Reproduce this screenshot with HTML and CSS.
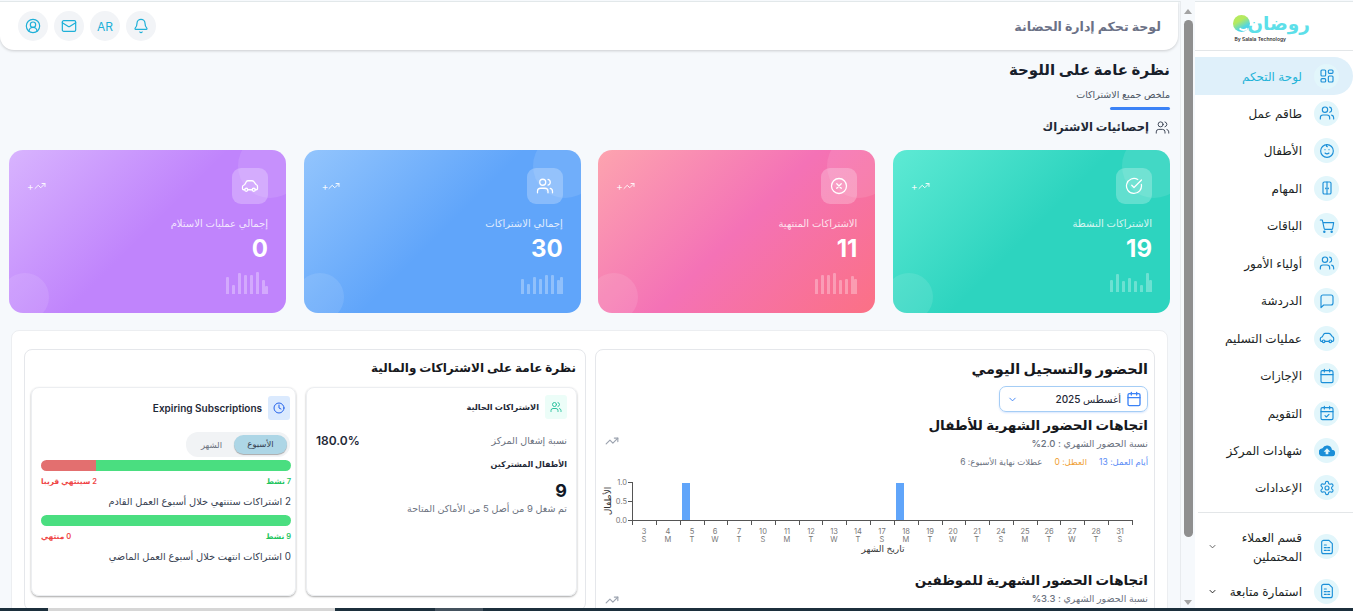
FILE: index.html
```html
<!DOCTYPE html>
<html lang="ar" dir="rtl">
<head>
    <meta charset="UTF-8">
    <title>لوحة تحكم إدارة الحضانة</title>
    <link rel="stylesheet" href="styles.css">
</head>
<body>
    <svg class="sprites" width="0" height="0">
        <symbol id="i-users" viewBox="0 0 24 24"><path d="M16 21v-2a4 4 0 0 0-4-4H6a4 4 0 0 0-4 4v2"/><circle cx="9" cy="7" r="4"/><path d="M22 21v-2a4 4 0 0 0-3-3.87"/><path d="M16 3.13a4 4 0 0 1 0 7.75"/></symbol>
        <symbol id="i-car" viewBox="0 0 24 24"><path d="M5 17H3.5A1.5 1.5 0 0 1 2 15.500V13c0-1 .6-1.700 1.500-2L5 10l2-3.500C7.500 5.600 8.300 5 9.300 5h5.400c1 0 1.800.5 2.400 1.300L20 10l1 .6c.7.4 1 1.100 1 1.900v3a1.500 1.500 0 0 1-1.500 1.500H19"/><circle cx="7" cy="17" r="2"/><circle cx="17" cy="17" r="2"/><path d="M9 17h6"/></symbol>
        <symbol id="i-cal" viewBox="0 0 24 24"><rect x="3" y="4" width="18" height="18" rx="2"/><path d="M16 2v4M8 2v4M3 10h18"/></symbol>
        <symbol id="i-trend" viewBox="0 0 24 24"><path d="M22 7l-8.500 8.500-5-5L2 17"/><path d="M16 7h6v6"/></symbol>
        <symbol id="i-sheet" viewBox="0 0 24 24"><path d="M15 2H7a3 3 0 0 0-3 3v14a3 3 0 0 0 3 3h10a3 3 0 0 0 3-3V7z"/><path d="M8 13h3M13 13h3M8 17h3M13 17h3M8 9h3"/></symbol>
        <symbol id="i-chev" viewBox="0 0 24 24"><path d="M6 9l6 6 6-6"/></symbol>
    </svg>

    <aside class="sidebar">
        <div class="logo">
            <div class="logo-mark">
                <span class="logo-text">روضان</span>
                <span class="logo-dot"></span>
            </div>
            <span class="logo-by" dir="ltr">By Salala Technology</span>
        </div>
        <nav class="nav">
            <a class="nav-item active"><span class="nav-icon"><svg class="ic" viewBox="0 0 24 24"><rect x="3" y="3" width="7" height="9" rx="1.500"/><rect x="14" y="3" width="7" height="5" rx="1.500"/><rect x="14" y="12" width="7" height="9" rx="1.500"/><rect x="3" y="16" width="7" height="5" rx="1.500"/></svg></span><span>لوحة التحكم</span></a>
            <a class="nav-item"><span class="nav-icon"><svg class="ic"><use href="#i-users"/></svg></span><span>طاقم عمل</span></a>
            <a class="nav-item"><span class="nav-icon"><svg class="ic" viewBox="0 0 24 24"><circle cx="12" cy="12" r="9.500"/><path d="M9 10h.01M15 10h.01M9 15c1.800 1.500 4.200 1.500 6 0M12 2.500c-1.500 1.500-1 3 .5 3"/></svg></span><span>الأطفال</span></a>
            <a class="nav-item"><span class="nav-icon"><svg class="ic" viewBox="0 0 24 24"><rect x="6" y="3" width="12" height="18" rx="2"/><path d="M12 3v18M10 12v1M14 12v1"/></svg></span><span>المهام</span></a>
            <a class="nav-item"><span class="nav-icon"><svg class="ic" viewBox="0 0 24 24"><circle cx="8" cy="20.500" r="1"/><circle cx="19" cy="20.500" r="1"/><path d="M2 3h3l2.700 12.400a2 2 0 0 0 2 1.600h8.800a2 2 0 0 0 2-1.600L22 7H6"/></svg></span><span>الباقات</span></a>
            <a class="nav-item"><span class="nav-icon"><svg class="ic"><use href="#i-users"/></svg></span><span>أولياء الأمور</span></a>
            <a class="nav-item"><span class="nav-icon"><svg class="ic" viewBox="0 0 24 24"><path d="M21 15a3 3 0 0 1-3 3H7l-4 4V6a3 3 0 0 1 3-3h12a3 3 0 0 1 3 3z"/></svg></span><span>الدردشة</span></a>
            <a class="nav-item"><span class="nav-icon"><svg class="ic"><use href="#i-car"/></svg></span><span>عمليات التسليم</span></a>
            <a class="nav-item"><span class="nav-icon"><svg class="ic"><use href="#i-cal"/></svg></span><span>الإجازات</span></a>
            <a class="nav-item"><span class="nav-icon"><svg class="ic" viewBox="0 0 24 24"><rect x="3" y="4" width="18" height="18" rx="2"/><path d="M16 2v4M8 2v4M3 10h18M9 16l2 2 4-4"/></svg></span><span>التقويم</span></a>
            <a class="nav-item"><span class="nav-icon"><svg class="ic-fill" viewBox="0 0 24 24"><path d="M19.400 10A7.500 7.500 0 0 0 5.300 8 6 6 0 0 0 6 20h13a5 5 0 0 0 .4-10zM14 13v4h-4v-4H7l5-5 5 5z"/></svg></span><span>شهادات المركز</span></a>
            <a class="nav-item"><span class="nav-icon"><svg class="ic" viewBox="0 0 24 24"><circle cx="12" cy="12" r="3"/><path d="M12.220 2h-.44a2 2 0 0 0-2 2v.18a2 2 0 0 1-1 1.730l-.43.25a2 2 0 0 1-2 0l-.15-.08a2 2 0 0 0-2.730.73l-.22.38a2 2 0 0 0 .73 2.730l.15.1a2 2 0 0 1 1 1.720v.51a2 2 0 0 1-1 1.740l-.15.09a2 2 0 0 0-.73 2.730l.22.38a2 2 0 0 0 2.730.73l.15-.08a2 2 0 0 1 2 0l.43.25a2 2 0 0 1 1 1.730V20a2 2 0 0 0 2 2h.44a2 2 0 0 0 2-2v-.18a2 2 0 0 1 1-1.730l.43-.25a2 2 0 0 1 2 0l.15.08a2 2 0 0 0 2.730-.73l.22-.39a2 2 0 0 0-.73-2.730l-.15-.08a2 2 0 0 1-1-1.740v-.5a2 2 0 0 1 1-1.740l.15-.09a2 2 0 0 0 .73-2.730l-.22-.38a2 2 0 0 0-2.730-.73l-.15.08a2 2 0 0 1-2 0l-.43-.25a2 2 0 0 1-1-1.730V4a2 2 0 0 0-2-2z"/></svg></span><span>الإعدادات</span></a>
        </nav>
        <div class="nav-sep"></div>
        <nav class="nav-extra">
            <a class="nav-item wrap"><span class="nav-icon"><svg class="ic"><use href="#i-sheet"/></svg></span><span class="nav-label">قسم العملاء المحتملين</span><svg class="nav-chev"><use href="#i-chev"/></svg></a>
            <a class="nav-item wrap"><span class="nav-icon"><svg class="ic"><use href="#i-sheet"/></svg></span><span class="nav-label">استمارة متابعة</span><svg class="nav-chev dark"><use href="#i-chev"/></svg></a>
        </nav>
    </aside>

    <div class="scrollbar">
        <span class="arrow up"></span>
        <span class="thumb"></span>
        <span class="arrow down"></span>
    </div>

    <main class="main">
        <header class="topbar">
            <h2 class="topbar-title">لوحة تحكم إدارة الحضانة</h2>
            <div class="topbar-actions">
                <span class="round"><svg class="ic" viewBox="0 0 24 24"><path d="M10.300 21a2 2 0 0 0 3.400 0"/><path d="M3.300 15.300A1 1 0 0 0 4 17h16a1 1 0 0 0 .7-1.700C19.400 14 18 12.500 18 8A6 6 0 0 0 6 8c0 4.500-1.400 6-2.700 7.300"/></svg></span>
                <span class="round lang">AR</span>
                <span class="round"><svg class="ic" viewBox="0 0 24 24"><rect x="2" y="4" width="20" height="16" rx="2"/><path d="M22 7l-8.970 5.700a1.940 1.940 0 0 1-2.060 0L2 7"/></svg></span>
                <span class="round"><svg class="ic" viewBox="0 0 24 24"><path d="M18 20a6 6 0 0 0-12 0"/><circle cx="12" cy="10" r="4"/><circle cx="12" cy="12" r="10"/></svg></span>
            </div>
        </header>

        <section class="overview">
            <h1>نظرة عامة على اللوحة</h1>
            <p class="overview-sub">ملخص جميع الاشتراكات</p>
            <div class="overview-line"></div>
            <h3 class="section-title"><svg class="ic"><use href="#i-users"/></svg>إحصائيات الاشتراك</h3>
        </section>

        <section class="stats">
            <div class="stat teal">
                <div class="stat-top">
                    <span class="stat-icon"><svg class="ic" viewBox="0 0 24 24"><path d="M21.800 10A10 10 0 1 1 17 3.300"/><path d="M9 11l3 3L22 4"/></svg></span>
                    <span class="stat-trend" dir="ltr">+<svg class="ic"><use href="#i-trend"/></svg></span>
                </div>
                <div class="stat-label">الاشتراكات النشطة</div>
                <div class="stat-num">19</div>
                <div class="spark"><i class="h12"></i><i class="h18"></i><i class="h11"></i><i class="h14"></i><i class="h11"></i><i class="h7"></i><i class="h19"></i><i class="h12"></i></div>
            </div>
            <div class="stat pink">
                <div class="stat-top">
                    <span class="stat-icon"><svg class="ic" viewBox="0 0 24 24"><circle cx="12" cy="12" r="10"/><path d="M15 9l-6 6M9 9l6 6"/></svg></span>
                    <span class="stat-trend" dir="ltr">+<svg class="ic"><use href="#i-trend"/></svg></span>
                </div>
                <div class="stat-label">الاشتراكات المنتهية</div>
                <div class="stat-num">11</div>
                <div class="spark"><i class="h15"></i><i class="h19"></i><i class="h19"></i><i class="h21"></i><i class="h14"></i><i class="h15"></i><i class="h18"></i><i class="h15"></i></div>
            </div>
            <div class="stat blue">
                <div class="stat-top">
                    <span class="stat-icon"><svg class="ic"><use href="#i-users"/></svg></span>
                    <span class="stat-trend" dir="ltr">+<svg class="ic"><use href="#i-trend"/></svg></span>
                </div>
                <div class="stat-label">إجمالي الاشتراكات</div>
                <div class="stat-num">30</div>
                <div class="spark"><i class="h15"></i><i class="h10"></i><i class="h17"></i><i class="h15"></i><i class="h19"></i><i class="h19"></i><i class="h14"></i><i class="h17"></i></div>
            </div>
            <div class="stat purple">
                <div class="stat-top">
                    <span class="stat-icon"><svg class="ic"><use href="#i-car"/></svg></span>
                    <span class="stat-trend" dir="ltr">+<svg class="ic"><use href="#i-trend"/></svg></span>
                </div>
                <div class="stat-label">إجمالي عمليات الاستلام</div>
                <div class="stat-num">0</div>
                <div class="spark"><i class="h17"></i><i class="h9"></i><i class="h21"></i><i class="h19"></i><i class="h19"></i><i class="h22"></i><i class="h14"></i><i class="h8"></i></div>
            </div>
        </section>

        <section class="panel">
            <div class="panel-card attendance">
                <h2 class="att-title">الحضور والتسجيل اليومي</h2>
                <div class="month-select">
                    <svg class="ic"><use href="#i-cal"/></svg>
                    <span class="month-name">أغسطس 2025</span>
                    <svg class="ic month-chev"><use href="#i-chev"/></svg>
                </div>
                <div class="trend-head">
                    <div>
                        <h3>اتجاهات الحضور الشهرية للأطفال</h3>
                        <p class="trend-rate">نسبة الحضور الشهري : 2.0%</p>
                        <p class="trend-legend"><span class="c-blue">أيام العمل: 13</span><span class="c-orange">العطل: 0</span><span>عطلات نهاية الأسبوع: 6</span></p>
                    </div>
                    <svg class="ic trend-icon"><use href="#i-trend"/></svg>
                </div>
                <svg class="chart" width="546" height="88" viewBox="0 0 546 88">
                    <rect class="bar" x="80" y="9" width="8" height="37"/>
                    <rect class="bar" x="294" y="9" width="8" height="37"/>
                    <path class="axis" d="M30.500 8v38.500H530.500"/>
                    <path class="axis" d="M26 8.500h4M26 27.500h4M26 46.500h4M30.500 46v5M54.500 46v5M78.500 46v5M102.500 46v5M125.500 46v5M149.500 46v5M173.500 46v5M197.500 46v5M220.500 46v5M244.500 46v5M268.500 46v5M292.500 46v5M316.500 46v5M340.500 46v5M363.500 46v5M387.500 46v5M411.500 46v5M435.500 46v5M458.500 46v5M482.500 46v5M506.500 46v5M530.500 46v5"/>
                    <g class="y-labels">
                        <text x="25" y="11">1.0</text>
                        <text x="25" y="30">0.5</text>
                        <text x="25" y="49">0.0</text>
                    </g>
                    <text class="y-title" transform="translate(9 27) rotate(-90)">الأطفال</text>
                    <g class="x-labels">
                        <text x="42" y="60">3</text><text x="42" y="68">S</text>
                        <text x="66" y="60">4</text><text x="66" y="68">M</text>
                        <text x="90" y="60">5</text><text x="90" y="68">T</text>
                        <text x="113" y="60">6</text><text x="113" y="68">W</text>
                        <text x="137" y="60">7</text><text x="137" y="68">T</text>
                        <text x="161" y="60">10</text><text x="161" y="68">S</text>
                        <text x="185" y="60">11</text><text x="185" y="68">M</text>
                        <text x="209" y="60">12</text><text x="209" y="68">T</text>
                        <text x="232" y="60">13</text><text x="232" y="68">W</text>
                        <text x="256" y="60">14</text><text x="256" y="68">T</text>
                        <text x="280" y="60">17</text><text x="280" y="68">S</text>
                        <text x="304" y="60">18</text><text x="304" y="68">M</text>
                        <text x="328" y="60">19</text><text x="328" y="68">T</text>
                        <text x="351" y="60">20</text><text x="351" y="68">W</text>
                        <text x="375" y="60">21</text><text x="375" y="68">T</text>
                        <text x="399" y="60">24</text><text x="399" y="68">S</text>
                        <text x="423" y="60">25</text><text x="423" y="68">M</text>
                        <text x="447" y="60">26</text><text x="447" y="68">T</text>
                        <text x="470" y="60">27</text><text x="470" y="68">W</text>
                        <text x="494" y="60">28</text><text x="494" y="68">T</text>
                        <text x="518" y="60">31</text><text x="518" y="68">S</text>
                    </g>
                    <text class="x-title" x="281" y="78">تاريخ الشهر</text>
                </svg>
                <div class="trend-head second">
                    <div>
                        <h3>اتجاهات الحضور الشهرية للموظفين</h3>
                        <p class="trend-rate">نسبة الحضور الشهري : 3.3%</p>
                    </div>
                    <svg class="ic trend-icon"><use href="#i-trend"/></svg>
                </div>
            </div>

            <div class="panel-card finance">
                <h2 class="fin-title">نظرة عامة على الاشتراكات والمالية</h2>
                <div class="fin-cols">
                    <div class="sub-card current">
                        <div class="sub-head">
                            <span class="sub-icon mint"><svg class="ic"><use href="#i-users"/></svg></span>
                            <span class="sub-name">الاشتراكات الحالية</span>
                        </div>
                        <div class="rate-row">
                            <span class="rate-label">نسبة إشغال المركز</span>
                            <span class="rate-val">180.0%</span>
                        </div>
                        <div class="kids-label">الأطفال المشتركين</div>
                        <div class="kids-num">9</div>
                        <div class="kids-note">تم شغل 9 من أصل 5 من الأماكن المتاحة</div>
                    </div>
                    <div class="sub-card expiring">
                        <div class="sub-head">
                            <span class="sub-icon sky"><svg class="ic" viewBox="0 0 24 24"><circle cx="12" cy="12" r="10"/><path d="M12 6v6l4 2"/></svg></span>
                            <span class="sub-name en">Expiring Subscriptions</span>
                        </div>
                        <div class="toggle">
                            <span class="toggle-on">الأسبوع</span>
                            <span class="toggle-off">الشهر</span>
                        </div>
                        <div class="progress"><span class="fill-green w78"></span><span class="fill-red w22"></span></div>
                        <div class="progress-legend"><span class="c-green">7 نشط</span><span class="c-red">2 سينتهي قريبا</span></div>
                        <p class="progress-note">2 اشتراكات ستنتهي خلال أسبوع العمل القادم</p>
                        <div class="progress"><span class="fill-green w100"></span></div>
                        <div class="progress-legend"><span class="c-green">9 نشط</span><span class="c-red">0 منتهي</span></div>
                        <p class="progress-note">0 اشتراكات انتهت خلال أسبوع العمل الماضي</p>
                    </div>
                </div>
            </div>
        </section>
    </main>

    <div class="taskbar"><span class="tb-a"></span><span class="tb-b"></span><span class="tb-c"></span></div>
</body>
</html>
```

FILE: styles.css
```css
* {
    box-sizing: border-box;
}

html, body {
    height: 611px;
    overflow: hidden;
}

body {
    margin: 0;
    padding-top: 1px;
    display: flex;
    position: relative;
    font-family: Inter, "DejaVu Sans", sans-serif;
    background: #f6f9fc;
    color: #111827;
}

h1, h2, h3, p {
    margin: 0;
}

.sprites {
    position: absolute;
}

.ic {
    width: 16px;
    height: 16px;
    fill: none;
    stroke: currentColor;
    stroke-width: 2;
    stroke-linecap: round;
    stroke-linejoin: round;
    flex: none;
}

.ic-fill {
    width: 16px;
    height: 16px;
    fill: currentColor;
}

/* sidebar */
.sidebar {
    width: 158px;
    flex: none;
    height: 610px;
    background: #fff;
    border-top: 1px solid #e2e8ea;
}

.logo {
    height: 49px;
    border-bottom: 1px solid #e3e6e8;
    display: flex;
    flex-direction: column;
    align-items: flex-start;
    padding: 8px 43px 0 0;
}

.logo-mark {
    display: flex;
    align-items: center;
    height: 26px;
}

.logo-text {
    font-size: 18.500px;
    font-weight: 700;
    line-height: 26px;
    color: #5ddfe9;
}

.logo-dot {
    width: 17px;
    height: 17px;
    border-radius: 50%;
    background: linear-gradient(150deg, #b5ea5f 35%, #4fd5e6 70%);
    margin-right: -3px;
    position: relative;
}

.logo-dot::after {
    content: "";
    position: absolute;
    left: 4px;
    top: 3px;
    width: 9px;
    height: 9px;
    border: 2px solid transparent;
    border-bottom-color: #fff;
    border-radius: 50%;
}

.logo-by {
    font-size: 5px;
    font-weight: 600;
    color: #333;
    line-height: 6px;
    margin-right: 24px;
}

.nav {
    padding-top: 6px;
    display: flex;
    flex-direction: column;
}

.nav-item {
    height: 38px;
    margin-bottom: -0.55px;
    display: flex;
    align-items: center;
    gap: 12px;
    padding-right: 14px;
    font-size: 12px;
    color: #1b1f24;
}

.nav-item.active {
    background: #dff0fa;
    color: #1fb3d8;
    border-radius: 0 19px 19px 0;
}

.nav-icon {
    width: 25px;
    height: 25px;
    border-radius: 50%;
    background: #e2f6fb;
    color: #1b8fd8;
    display: flex;
    align-items: center;
    justify-content: center;
    flex: none;
}

.nav-icon .ic {
    stroke-width: 1.700;
}

.nav-sep {
    height: 1px;
    background: #e3e6e8;
    margin: 6px 0 0 3px;
}

.nav-extra {
    display: flex;
    flex-direction: column;
    padding-top: 14px;
}

.nav-extra .nav-item:first-child {
    height: 39px;
    margin-bottom: 6px;
}

.nav-label {
    width: 80px;
    line-height: 19px;
}

.nav-chev {
    width: 11px;
    height: 11px;
    margin-right: -8px;
    flex: none;
    fill: none;
    stroke: #555;
    stroke-width: 2;
}

.nav-chev.dark {
    stroke: #111;
}

/* fake scrollbar */
.scrollbar {
    width: 15px;
    flex: none;
    height: 607px;
    background: #f6f9fc;
    display: flex;
    flex-direction: column;
    align-items: center;
    padding: 8px 0 3px;
    border-left: 1px solid #e8ebee;
}

.thumb {
    width: 9px;
    flex: 1;
    margin: 6px 0 63px;
    border-radius: 5px;
    background: #8f8f8f;
}

.arrow {
    width: 0;
    height: 0;
    border-left: 4px solid transparent;
    border-right: 4px solid transparent;
}

.arrow.up {
    border-bottom: 5px solid #a3a3a3;
}

.arrow.down {
    border-top: 5px solid #a3a3a3;
}

/* main */
.main {
    width: 1180px;
    flex: none;
    height: 607px;
    overflow: hidden;
    border-top: 1px solid #e2e8ea;
}

.topbar {
    height: 48px;
    background: #fff;
    border-radius: 0 0 14px 14px;
    box-shadow: 0 1px 3px rgba(0, 0, 0, 0.18);
    display: flex;
    align-items: center;
    justify-content: space-between;
    padding: 0 17px 0 18px;
    margin-right: 2px;
}

.topbar-title {
    font-size: 12.600px;
    font-weight: 700;
    color: #6b7186;
}

.topbar-actions {
    display: flex;
    gap: 6px;
}

.round {
    width: 30px;
    height: 30px;
    border-radius: 50%;
    background: #f2f4f7;
    color: #1fb0d8;
    display: flex;
    align-items: center;
    justify-content: center;
    font-size: 12px;
    font-weight: 400;
}

.round .ic {
    stroke-width: 1.800;
}

.overview {
    padding: 9px 10px 0 0;
}

.overview h1 {
    font-size: 15px;
    line-height: 22px;
    font-weight: 700;
    color: #17202b;
}

.overview-sub {
    font-size: 9.500px;
    line-height: 14px;
    margin-top: 7px;
    color: #4b5563;
}

.overview-line {
    width: 60px;
    height: 3px;
    border-radius: 2px;
    background: #3b82f6;
    margin-top: 5px;
}

.section-title {
    display: flex;
    align-items: center;
    gap: 6px;
    font-size: 11.600px;
    line-height: 20px;
    font-weight: 700;
    color: #1f2937;
    margin-top: 7px;
}

.section-title .ic {
    width: 15px;
    height: 15px;
    stroke-width: 1.500;
    color: #374151;
}

/* stat cards */
.stats {
    display: grid;
    grid-template-columns: repeat(4, 277px);
    justify-content: space-between;
    padding: 13px 10px 0 9px;
}

.stat {
    height: 163px;
    border-radius: 14px;
    padding: 18px;
    color: #fff;
    position: relative;
    overflow: hidden;
}

.stat::before, .stat::after {
    content: "";
    position: absolute;
    border-radius: 50%;
    background: rgba(255, 255, 255, 0.1);
}

.stat::before {
    width: 64px;
    height: 64px;
    top: -16px;
    right: -16px;
}

.stat::after {
    width: 48px;
    height: 48px;
    bottom: -8px;
    left: -8px;
}

.teal {
    background: linear-gradient(135deg, #5eead4, #2dd4bf 50%);
}

.pink {
    background: linear-gradient(135deg, #fda4af, #f472b6 50%, #fb7185);
}

.blue {
    background: linear-gradient(135deg, #93c5fd, #60a5fa 50%);
}

.purple {
    background: linear-gradient(135deg, #d8b4fe, #c084fc 50%);
}

.stat-top {
    display: flex;
    justify-content: space-between;
    align-items: center;
    height: 36px;
}

.stat-icon {
    width: 36px;
    height: 36px;
    border-radius: 9px;
    background: rgba(255, 255, 255, 0.25);
    display: flex;
    align-items: center;
    justify-content: center;
}

.stat-icon .ic {
    width: 18px;
    height: 18px;
    stroke-width: 1.700;
}

.stat-trend {
    display: flex;
    align-items: center;
    font-size: 10px;
    opacity: 0.9;
    line-height: 1;
}

.stat-trend .ic {
    width: 12px;
    height: 12px;
}

.stat-label {
    font-size: 10px;
    line-height: 14px;
    margin-top: 12px;
    opacity: 0.8;
}

.stat-num {
    font-size: 24px;
    font-weight: 700;
    line-height: 30px;
    margin-top: 4px;
}

.spark {
    display: flex;
    direction: ltr;
    align-items: flex-end;
    gap: 3px;
    height: 24px;
    width: 42px;
    margin-top: 6px;
}

.teal .spark {
    margin-top: 4px;
}

.spark i {
    width: 3px;
    background: rgba(255, 255, 255, 0.3);
    border-radius: 1px 1px 0 0;
    flex: none;
}

.spark i:last-child {
    margin-left: -3px;
}

.h7 { height: 7px; }
.h8 { height: 8px; }
.h9 { height: 9px; }
.h10 { height: 10px; }
.h11 { height: 11px; }
.h12 { height: 12px; }
.h14 { height: 14px; }
.h15 { height: 15px; }
.h17 { height: 17px; }
.h18 { height: 18px; }
.h19 { height: 19px; }
.h21 { height: 21px; }
.h22 { height: 22px; }

/* lower panel */
.panel {
    margin: 17px 12px 0 12px;
    width: 1157px;
    background: #fff;
    border: 1px solid #eceef1;
    border-radius: 8px;
    padding: 18px 12px 12px;
    display: flex;
    gap: 9px;
    height: 300px;
}

.panel-card {
    border: 1px solid #e5e7eb;
    border-radius: 8px;
}

.attendance {
    width: 560px;
    flex: none;
    padding: 7px 6px 0 8px;
    overflow: hidden;
    height: 280px;
}

.att-title {
    font-size: 14.400px;
    line-height: 24px;
    font-weight: 700;
    color: #16181d;
}

.month-select {
    width: 149px;
    height: 26px;
    border: 1px solid #a5cdf5;
    border-radius: 7px;
    box-shadow: 0 1px 2px rgba(59, 130, 246, 0.2);
    display: flex;
    align-items: center;
    gap: 5px;
    padding: 0 5px;
    margin-top: 5px;
    color: #3b82f6;
}

.month-name {
    font-size: 10px;
    font-weight: 500;
    color: #1f2937;
}

.month-chev {
    width: 11px;
    height: 11px;
    margin-right: auto;
    margin-left: 2px;
}

.trend-head {
    display: flex;
    justify-content: space-between;
    align-items: center;
}

.trend-head h3 {
    font-size: 13.500px;
    line-height: 20px;
    margin-top: 3px;
    font-weight: 700;
    color: #16181d;
}

.trend-rate {
    font-size: 9.500px;
    line-height: 16px;
    font-weight: 500;
    color: #6b7280;
    margin-top: 1px;
}

.trend-legend {
    font-size: 8.500px;
    line-height: 14px;
    margin-top: 3px;
    color: #6b7280;
    display: flex;
    gap: 12px;
}

.c-blue { color: #5b8cf6; }
.c-orange { color: #f0a033; }
.c-green { color: #22c55e; }
.c-red { color: #ef4444; }

.trend-icon {
    color: #9ca3af;
    width: 14px;
    height: 14px;
    margin-left: 1px;
}

.chart {
    display: block;
    margin-top: 5px;
    direction: ltr;
}

.bar {
    fill: #60a5fa;
}

.axis {
    fill: none;
    stroke: #555;
    stroke-width: 1;
}

.chart text {
    font-family: Inter, "DejaVu Sans", sans-serif;
}

.y-labels text {
    font-size: 7.500px;
    fill: #777;
    text-anchor: end;
}

.x-labels text {
    font-size: 7.500px;
    fill: #777;
    text-anchor: middle;
}

.y-title {
    font-size: 9px;
    fill: #333;
    text-anchor: middle;
}

.x-title {
    font-size: 9px;
    fill: #333;
    text-anchor: middle;
}

.trend-head.second {
    margin-top: 5px;
    align-items: flex-end;
}

.finance {
    flex: 1;
    padding: 8px 8px 0 6px;
    height: 262px;
}

.fin-title {
    font-size: 12px;
    line-height: 20px;
    padding-right: 1px;
    font-weight: 700;
    color: #16181d;
}

.fin-cols {
    display: grid;
    grid-template-columns: 271px 265px;
    gap: 10px;
    margin-top: 9px;
}

.sub-card {
    height: 209px;
    border-radius: 8px;
    border: 1px solid #eceef1;
    box-shadow: 0 1px 2px rgba(0, 0, 0, 0.35);
    padding: 7px 9px;
}

.sub-card.expiring {
    padding: 8px 4px 8px 9px;
}

.expiring .sub-head, .expiring .toggle {
    margin-right: 1px;
}

.sub-head {
    display: flex;
    align-items: center;
    gap: 6px;
}

.sub-icon {
    width: 22px;
    height: 24px;
    border-radius: 3px;
    display: flex;
    align-items: center;
    justify-content: center;
    flex: none;
}

.sub-icon .ic {
    width: 12px;
    height: 12px;
}

.sub-icon.mint {
    background: #ecfdf8;
    color: #2cc29f;
}

.sub-icon.sky {
    background: #dbeafe;
    color: #2563eb;
}

.sub-name {
    font-size: 8.200px;
    font-weight: 600;
    color: #1f2937;
}

.sub-name.en {
    font-size: 10px;
    font-family: Inter, sans-serif;
    direction: ltr;
}

.rate-row {
    display: flex;
    justify-content: space-between;
    align-items: center;
    margin-top: 14px;
}

.rate-label {
    font-size: 9.500px;
    color: #6b7280;
}

.rate-val {
    font-size: 12px;
    font-weight: 600;
    color: #1f2937;
}

.kids-label {
    font-size: 8px;
    font-weight: 700;
    margin-top: 11px;
    color: #1f2937;
}

.kids-num {
    font-size: 18px;
    font-weight: 700;
    margin-top: 11px;
    line-height: 22px;
}

.kids-note {
    font-size: 9.500px;
    color: #6b7280;
    margin-top: 1px;
}

.toggle {
    display: flex;
    width: 104px;
    height: 25px;
    margin-top: 12px;
    background: #f1f3f5;
    border-radius: 12px;
    padding: 3px;
    font-size: 8.500px;
    align-items: center;
    text-align: center;
    color: #6b7280;
}

.toggle-on {
    flex: 53;
    line-height: 19px;
    border-radius: 10px;
    background: #add6e6;
    color: #374151;
    box-shadow: 0 1px 1px rgba(0, 0, 0, 0.3);
}

.toggle-off {
    flex: 45;
}

.progress {
    height: 11px;
    border-radius: 6px;
    overflow: hidden;
    display: flex;
    margin-top: 3px;
}

.fill-green {
    background: #4ade80;
}

.fill-red {
    background: #e36f6f;
}

.w78 { width: 78%; }
.w22 { width: 22%; }
.w100 { width: 100%; }

.progress-legend {
    display: flex;
    justify-content: space-between;
    font-size: 7.500px;
    font-weight: 600;
    line-height: 12px;
    margin-top: 5px;
}

.progress-note {
    font-size: 9.800px;
    line-height: 14px;
    color: #374151;
    margin: 7px 0 6px;
}

.taskbar {
    position: absolute;
    left: 0;
    right: 0;
    bottom: 0;
    height: 3px;
    background: #1c2f3c;
    display: flex;
    direction: ltr;
}

.tb-a {
    width: 48px;
}

.tb-b {
    width: 287px;
    background: #d6d6d6;
}

.tb-c {
    width: 48px;
    margin-left: 100px;
    background: #44525e;
}
```
